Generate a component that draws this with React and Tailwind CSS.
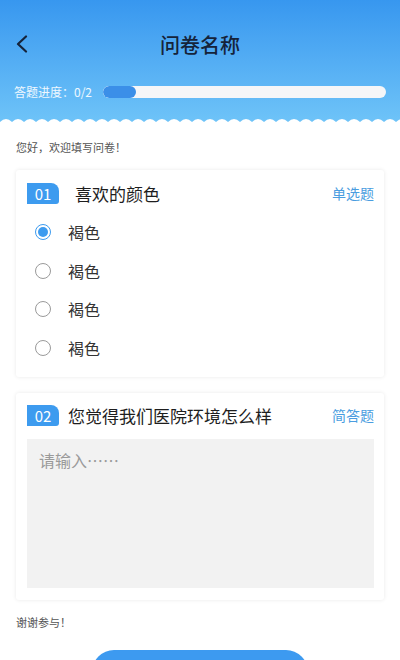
import React from "react";

const font = { fontFamily: '"Noto Sans CJK SC", "Noto Sans", sans-serif' };

function Badge({ n }) {
  return (
    <div className="flex h-[21px] w-[32px] items-center justify-center rounded-tr-[8px] rounded-br-[3px] bg-[#3d9bef] text-[15px] leading-none text-white">
      {n}
    </div>
  );
}

function Radio({ checked }) {
  return checked ? (
    <div className="flex h-[16px] w-[16px] items-center justify-center rounded-full border-[1.5px] border-[#3d9bef]">
      <div className="h-[10px] w-[10px] rounded-full bg-[#3d9bef]" />
    </div>
  ) : (
    <div className="h-[16px] w-[16px] rounded-full border border-[#9a9a9a]" />
  );
}

export default function App() {
  return (
    <div className="relative h-[660px] w-[400px] overflow-hidden bg-white" style={font}>
      <div className="bg-gradient-to-b from-[#3797ef] to-[#6fc4f8] h-[124px] flex flex-col">
        <div className="relative flex h-[50px] mt-[19px] items-center justify-center">
          <svg className="absolute left-[15px] top-[16px]" width="14" height="18" viewBox="0 0 14 18" fill="none">
            <path d="M11 1.5 L3 9 L11 16.5" stroke="#15233a" strokeWidth="2.2" strokeLinecap="round" strokeLinejoin="round" />
          </svg>
          <span className="text-[20px] font-medium text-[#15233a] mt-[2px]">问卷名称</span>
        </div>
        <div className="flex items-center mt-[14px] px-[14px]">
          <span className="text-[12px] text-white/90 w-[89px]">答题进度：0/2</span>
          <div className="flex-1 h-[12px] rounded-full bg-[#f5f6f8] overflow-hidden">
            <div className="h-full w-[33px] rounded-full bg-[#3b8fe8]" />
          </div>
        </div>
      </div>
      <svg className="absolute left-0 top-[118px]" width="400" height="10" viewBox="0 0 400 10">
        <defs>
          <pattern id="wv" width="12" height="10" patternUnits="userSpaceOnUse">
            <path d="M0 4 Q3 1 6 1 Q9 1 12 4 L12 10 L0 10 Z" fill="white" />
          </pattern>
        </defs>
        <rect width="400" height="10" fill="url(#wv)" />
      </svg>

      <div className="px-[16px]">
        <p className="mt-[15px] text-[11px] leading-[16px] text-[#555]">您好，欢迎填写问卷！</p>

        <div className="mt-[15px] rounded-[3px] bg-white shadow-[0_0_4px_rgba(0,0,0,0.09)] pl-[11px] pr-[10px] pt-[13px] pb-[10px]">
          <div className="flex h-[21px] items-center">
            <Badge n="01" />
            <span className="ml-[16px] text-[17px] text-[#1e1e1e]">喜欢的颜色</span>
            <span className="ml-auto text-[14px] text-[#4a9de0]">单选题</span>
          </div>
          <div className="mt-[9px] flex flex-col">
            {[true, false, false, false].map((c, i) => (
              <div key={i} className="flex h-[38.5px] items-center pl-[8px]">
                <Radio checked={c} />
                <span className="ml-[17px] text-[16px] text-[#333]">褐色</span>
              </div>
            ))}
          </div>
        </div>

        <div className="mt-[16px] rounded-[3px] bg-white shadow-[0_0_4px_rgba(0,0,0,0.09)] pl-[11px] pr-[10px] pt-[12px] pb-[12px]">
          <div className="flex h-[21px] items-center">
            <Badge n="02" />
            <span className="ml-[9px] text-[17px] text-[#1e1e1e]">您觉得我们医院环境怎么样</span>
            <span className="ml-auto text-[14px] text-[#4a9de0]">简答题</span>
          </div>
          <div className="mt-[13px] h-[149px] bg-[#f2f2f2] px-[12px] pt-[9px] text-[16px] text-[#9a9a9a]">
            请输入……
          </div>
        </div>

        <p className="mt-[14px] text-[11px] leading-[16px] text-[#555]">谢谢参与！</p>
      </div>
      <div className="absolute left-[92px] top-[650px] h-[44px] w-[216px] rounded-full bg-[#3d9af0]" />
    </div>
  );
}
